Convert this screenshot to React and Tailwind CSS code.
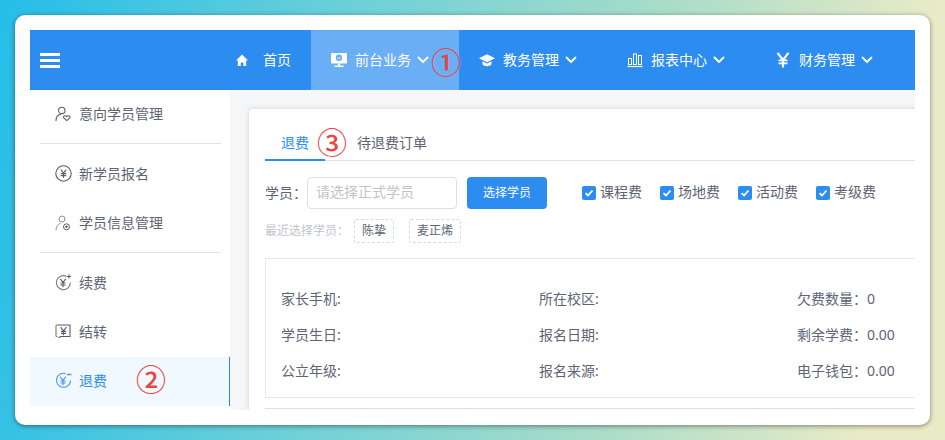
const Chevron = () => (
  <svg width="12" height="12" viewBox="0 0 12 12" fill="none" stroke="currentColor" strokeWidth="1.8" strokeLinecap="round" strokeLinejoin="round" className="ml-[6px]">
    <path d="M1.5 3.5 6 8l4.5-4.5" />
  </svg>
)

const HomeIcon = () => (
  <svg width="12" height="12" viewBox="0 0 12 12" fill="#fff" className="mr-[15px]">
    <path d="M6 .5 0 6.5h1.8V12h3V8.5h2.4V12h3V6.5H12z" />
  </svg>
)

const CapIcon = () => (
  <svg width="16" height="16" viewBox="0 0 16 16" fill="#fff">
    <path d="M8 2.2 16 6.2 8 10.2 0 6.2z" />
    <path d="M3.5 9.2v2.9c0 1.2 2.2 2.2 4.5 2.2s4.5-1 4.5-2.2V9.2L8 11.5z" />
  </svg>
)

const YenIcon = () => (
  <svg width="14" height="16" viewBox="0 0 14 16" fill="none" stroke="#fff" strokeWidth="2.2">
    <path d="M1.5 .8 7 8l5.5-7.2M7 8v7.6" />
    <path d="M2.5 8.4h9M2.5 11.4h9" strokeWidth="1.6" />
  </svg>
)

const MonitorIcon = () => (
  <svg width="16" height="16" viewBox="0 0 16 16">
    <rect x="0" y="1" width="16" height="10.5" rx="1" fill="#fff" />
    <rect x="6.8" y="11.5" width="2.4" height="2" fill="#fff" />
    <rect x="3.5" y="13.5" width="9" height="1.5" fill="#fff" />
    <circle cx="8" cy="5.8" r="3.2" fill="#6aaef5" />
    <path d="M6.4 5.8 7.6 7l2-2.2" fill="none" stroke="#fff" strokeWidth="1" />
  </svg>
)

const ChartIcon = () => (
  <svg width="16" height="16" viewBox="0 0 16 16" fill="none" stroke="#fff" strokeWidth="1">
    <rect x="1.5" y="6.5" width="3" height="6" />
    <rect x="6.5" y="2" width="3" height="10.5" />
    <rect x="11.5" y="3.5" width="3" height="9" />
    <path d="M0.5 14.5h15" strokeWidth="1.2" />
  </svg>
)

const PersonHeart = () => (
  <svg width="16" height="16" viewBox="0 0 16 16" fill="none" stroke="#565d6e" strokeWidth="1.1">
    <circle cx="6.8" cy="4.4" r="3.2" />
    <path d="M1 14.5c0-3.4 2-5.6 4.6-6.4" strokeLinecap="round" />
    <path d="M11.8 14.6 9 12.2c-1.5-1.5.8-3.5 2.8-1.7 2-1.8 4.3.2 2.8 1.7z" />
  </svg>
)

const YenCircle = () => (
  <svg width="17" height="17" viewBox="0 0 17 17" fill="none" stroke="#565d6e" strokeWidth="1.1">
    <circle cx="8.5" cy="8.5" r="7.7" />
    <path d="M5.8 4.6 8.5 8l2.7-3.4M8.5 8v4.8M5.8 8.6h5.4M5.8 10.6h5.4" />
  </svg>
)

const PersonGear = () => (
  <svg width="16" height="16" viewBox="0 0 16 16" fill="none" stroke="#8b909c" strokeWidth="1">
    <circle cx="7" cy="4" r="3" />
    <path d="M1 15c0-3.4 1.7-5.6 4.2-6.6" strokeLinecap="round" />
    <circle cx="11.5" cy="11.8" r="3" stroke="#565d6e" />
    <circle cx="11.5" cy="11.8" r="1.2" fill="#565d6e" stroke="none" />
  </svg>
)

const YenPlus = () => (
  <svg width="17" height="17" viewBox="0 0 17 17" fill="none" stroke="#565d6e" strokeWidth="1.1">
    <path d="M11.5 2.4A7 7 0 1 0 15.4 8.6" stroke="#8a7a5c" />
    <path d="M5.2 4.8 8 8.4l2.8-3.6M8 8.4v4.8M5.4 9h5.2M5.4 11h5.2" />
    <path d="M14 .5v4M12 2.5h4" />
  </svg>
)

const YenTransfer = () => (
  <svg width="16" height="17" viewBox="0 0 16 17" fill="none" stroke="#565d6e" strokeWidth="1.1">
    <path d="M3 2h12v11.5H5.5L3.5 15" />
    <path d="M1 2h2M1 13.5h1.5M1 2v11.5" stroke="#8a7a5c" />
    <path d="M5.6 4.2 8.5 7.8l2.9-3.6M8.5 7.8v4.4M6 8.4h5M6 10.4h5" />
  </svg>
)

const YenMinus = () => (
  <svg width="17" height="17" viewBox="0 0 17 17" fill="none" stroke="#4c94f5" strokeWidth="1.1">
    <path d="M10.5 1.6A7 7 0 1 0 15.5 8.4" />
    <path d="M5.2 4.8 8 8.4l2.8-3.6M8 8.4v4.8M5.4 9h5.2M5.4 11h5.2" />
    <path d="M12 2.5h4.5" strokeWidth="1.5" />
  </svg>
)

function NavItem({ icon, label, active, children }) {
  return (
    <div className={`relative flex h-full items-center pl-5 pr-[30px] text-sm text-white ${active ? 'bg-[#6aaef5]' : ''}`}>
      <span className="mr-2 flex w-4 justify-center">{icon}</span>
      <span>{label}</span>
      <Chevron />
      {children}
    </div>
  )
}

function SideItem({ icon, label, active, children }) {
  return (
    <div className={`relative flex h-[49px] items-center pb-[2px] pl-[24px] text-sm ${active ? 'border-r border-[#3a7fd5] bg-[#f0f9ff] text-[#2d8cf0]' : 'text-[#5d6475]'}`}>
      <span className="mr-[7px] flex w-[18px] justify-center">{icon}</span>
      <span>{label}</span>
      {children}
    </div>
  )
}

const Divider = () => <div className="mb-[6px] ml-[10px] mt-[4px] h-px w-[181px] bg-[#dfe0e3]" />

function Fee({ label }) {
  return (
    <label className="flex w-[78px] items-center text-sm text-[#5d6475]">
      <span className="mr-1 flex h-[14px] w-[14px] items-center justify-center rounded-[2px] bg-[#2d8cf0]">
        <svg width="10" height="10" viewBox="0 0 10 10" fill="none" stroke="#fff" strokeWidth="1.8">
          <path d="M1.5 5.2 4 7.5 8.5 2.5" />
        </svg>
      </span>
      <span className="pb-[2px]">{label}</span>
    </label>
  )
}

const Mark = ({ children, className }) => (
  <span className={`absolute z-10 text-[30px] font-medium leading-none text-[#ee4444] ${className}`}>{children}</span>
)

const infoRows = [
  ['家长手机:', '所在校区:', '欠费数量：0'],
  ['学员生日:', '报名日期:', '剩余学费：0.00'],
  ['公立年级:', '报名来源:', '电子钱包：0.00']
]

export default function App() {
  return (
    <div className="h-[440px] w-[945px] overflow-hidden bg-[linear-gradient(100deg,#25bde8_0%,#6dd0d8_35%,#a8dcc9_65%,#e9ebc6_92%)] p-[15px] font-['Noto_Sans','Noto_Sans_CJK_SC',sans-serif]">
      <div className="h-[410px] rounded-[10px] bg-white p-[15px] shadow-[0_1px_5px_rgba(0,0,0,0.45)]">
        <div className="flex h-[380px] flex-col overflow-hidden">
          <header className="flex h-[60px] shrink-0 items-center bg-[#2d8cf0]">
            <div className="w-[186px] pl-[10px]">
              <div className="flex w-5 flex-col gap-[3px]">
                <span className="h-[3px] bg-white" />
                <span className="h-[3px] bg-white" />
                <span className="h-[3px] bg-white" />
              </div>
            </div>
            <div className="flex h-full items-center pl-5 pr-5 text-sm text-white">
              <HomeIcon />
              首页
            </div>
            <NavItem active icon={<MonitorIcon />} label="前台业务">
              <Mark className="left-[120px] top-[18px]">①</Mark>
            </NavItem>
            <NavItem icon={<CapIcon />} label="教务管理" />
            <NavItem icon={<ChartIcon />} label="报表中心" />
            <NavItem icon={<YenIcon />} label="财务管理" />
          </header>

          <div className="flex min-h-0 flex-1">
            <aside className="w-[200px] shrink-0 bg-white">
              <SideItem icon={<PersonHeart />} label="意向学员管理" />
              <Divider />
              <SideItem icon={<YenCircle />} label="新学员报名" />
              <SideItem icon={<PersonGear />} label="学员信息管理" />
              <Divider />
              <SideItem icon={<YenPlus />} label="续费" />
              <SideItem icon={<YenTransfer />} label="结转" />
              <SideItem active icon={<YenMinus />} label="退费">
                <Mark className="left-[106px] top-[8px]">②</Mark>
              </SideItem>
            </aside>

            <main className="min-w-0 flex-1 overflow-hidden bg-[#f5f6f8] pl-[19px] pt-[19px]">
              <div className="w-[800px] rounded-[4px] bg-white pl-4 pt-4 shadow-[0_0_5px_rgba(0,0,0,0.15)]">
                <div className="relative flex h-[36px] gap-4 border-b border-[#dfe3e8] text-sm">
                  <div className="h-[36px] border-b-2 border-[#2d8cf0] px-4 pt-[8px] text-[#2d8cf0]">退费</div>
                  <div className="px-4 pt-[8px] text-[#5d6475]">待退费订单</div>
                  <Mark className="left-[52px] top-[3px]">③</Mark>
                </div>

                <div className="mt-4 flex items-center text-sm text-[#5d6475]">
                  <span className="w-[42px]">学员：</span>
                  <div className="flex h-8 w-[150px] items-center rounded-[4px] border border-[#dcdfe6] pb-[2px] pl-2 text-[#c0c4cc]">请选择正式学员</div>
                  <button className="ml-[10px] h-8 w-20 rounded-[4px] bg-[#2d8cf0] text-xs text-white">选择学员</button>
                  <div className="ml-[35px] flex">
                    <Fee label="课程费" />
                    <Fee label="场地费" />
                    <Fee label="活动费" />
                    <Fee label="考级费" />
                  </div>
                </div>

                <div className="mt-[10px] flex h-6 items-center text-xs text-[#c0c4cc]">
                  <span className="w-[89px]">最近选择学员：</span>
                  <span className="mr-[15px] flex h-6 items-center rounded-[2px] border border-dashed border-[#d9d9d9] px-[7px] text-[#5d6475]">陈挚</span>
                  <span className="flex h-6 items-center rounded-[2px] border border-dashed border-[#d9d9d9] px-[7px] text-[#5d6475]">麦正烯</span>
                </div>

                <div className="mt-[15px] h-[140px] border border-[#e8e8e8] pl-[15px] pt-[22px] text-sm text-[#5d6475]">
                  {infoRows.map((row) => (
                    <div className="grid h-9 w-[774px] grid-cols-3 items-center" key={row[0]}>
                      {row.map((cell) => (
                        <span key={cell}>{cell}</span>
                      ))}
                    </div>
                  ))}
                </div>

                <div className="mt-[10px] flex h-[4px] border-t border-[#dcdfe6]">
                  {[100, 100, 288, 80, 80].map((w, i) => (
                    <span key={i} className="border-l border-[#e4e6ea]" style={{ width: w }} />
                  ))}
                </div>
              </div>
            </main>
          </div>
        </div>
      </div>
    </div>
  )
}
